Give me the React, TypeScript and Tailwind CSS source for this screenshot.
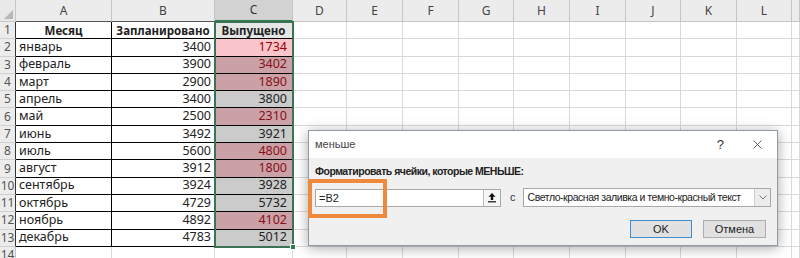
import { X } from "lucide-react";

const font = { fontFamily: '"Noto Sans", "Open Sans", sans-serif' };
const ui = { fontFamily: '"Liberation Sans", Arial, sans-serif' };

type Row = { month: string; plan: number; done: number; hit: boolean };

const rows: Row[] = [
  { month: "январь", plan: 3400, done: 1734, hit: true },
  { month: "февраль", plan: 3900, done: 3402, hit: true },
  { month: "март", plan: 2900, done: 1890, hit: true },
  { month: "апрель", plan: 3400, done: 3800, hit: false },
  { month: "май", plan: 2500, done: 2310, hit: true },
  { month: "июнь", plan: 3492, done: 3921, hit: false },
  { month: "июль", plan: 5600, done: 4800, hit: true },
  { month: "август", plan: 3912, done: 1800, hit: true },
  { month: "сентябрь", plan: 3924, done: 3928, hit: false },
  { month: "октябрь", plan: 4729, done: 5732, hit: false },
  { month: "ноябрь", plan: 4892, done: 4102, hit: true },
  { month: "декабрь", plan: 4783, done: 5012, hit: false },
];

const letters = ["D", "E", "F", "G", "H", "I", "J", "K", "L", ""];

function EmptyCells() {
  return (
    <>
      {letters.map((l, i) => (
        <div key={i} className="border-r border-b border-[#d9d9d9] bg-white" />
      ))}
    </>
  );
}

export default function App() {
  return (
    <div className="relative h-[258px] w-[800px] overflow-hidden bg-white text-[12.5px] text-[#222]" style={font}>
      {/* лист */}
      <div className="relative grid h-[258px] grid-cols-[16px_96px_103px_78px_54px_56px_56px_55px_56px_56px_55px_56px_55px_1fr] grid-rows-[22px_repeat(13,17.3px)_11px]">
        {/* заголовки столбцов */}
        <div className="relative border-r border-b border-[#c6c6c6] bg-[#e9e9e9]">
          <div className="absolute right-[2px] bottom-[2px] h-0 w-0 border-b-[9px] border-l-[9px] border-b-[#b7b7b7] border-l-transparent" />
        </div>
        <div className="flex items-center justify-center border-r border-b border-r-[#c6c6c6] border-b-[#555] bg-[#ececec] text-[12px] text-[#444]">A</div>
        <div className="flex items-center justify-center border-r border-b border-r-[#c6c6c6] border-b-[#555] bg-[#ececec] text-[12px] text-[#444]">B</div>
        <div className="flex items-center justify-center border-r border-b-2 border-r-[#c6c6c6] border-b-[#2f7a4e] bg-[#d2d2d2] text-[12px] text-[#333]">C</div>
        {letters.map((l, i) => (
          <div key={i} className="flex items-center justify-center border-r border-b border-[#c6c6c6] bg-[#ececec] text-[12px] text-[#444]">
            {l}
          </div>
        ))}

        {/* строка 1 */}
        <div className="flex items-center justify-center border-r border-b border-r-[#333] border-b-[#d0d0d0] bg-[#ececec] text-[12px] text-[#555]">1</div>
        <div className="flex items-center justify-center border-r border-b border-black text-[11.5px] font-bold">Месяц</div>
        <div className="flex items-center justify-center border-r border-b border-black text-[11.5px] font-bold">Запланировано</div>
        <div className="flex items-center justify-center border-r border-b border-black bg-[#e6e6e6] text-[11.5px] font-bold">Выпущено</div>
        <EmptyCells />

        {rows.map((r, i) => (
          <Line key={r.month} n={i + 2} row={r} active={i === 0} />
        ))}

        {/* строка 14 */}
        <div className="flex items-start justify-center border-r border-[#c6c6c6] bg-[#ececec] text-[12px] leading-[16px] text-[#555]">14</div>
        <div className="border-r border-[#d9d9d9]" />
        <div className="border-r border-[#d9d9d9]" />
        <div className="border-r border-[#d9d9d9]" />
        {letters.map((l, i) => (
          <div key={i} className="border-r border-[#d9d9d9]" />
        ))}

        {/* выделение C1:C13 */}
        <div className="pointer-events-none absolute top-[21px] left-[214px] h-[227px] w-[80px] border-2 border-[#3d7355]" />
        <div className="pointer-events-none absolute top-[244px] left-[290px] h-[6px] w-[6px] border border-white bg-[#2f7a4e]" />
      </div>

      {/* диалог */}
      <div className="absolute top-[130px] left-[308px] flex h-[116px] w-[470px] flex-col border border-[#8f9aa6] bg-[#f0f0f0] shadow-[0_2px_12px_rgba(0,0,0,0.35)]" style={ui}>
        <div className="flex h-[27px] items-center justify-between bg-white pr-[12px] pl-[6px]">
          <span className="text-[11px] text-[#444]">меньше</span>
          <div className="flex items-center gap-[26px] text-[#333]">
            <span className="text-[13px]">?</span>
            <X size={15} strokeWidth={1.2} />
          </div>
        </div>

        <div className="relative flex flex-1 flex-col px-[6px] pt-[6px]">
          <div className="text-[10.5px] leading-[14px] font-bold tracking-[-0.5px] text-[#222]">Форматировать ячейки, которые МЕНЬШЕ:</div>

          <div className="mt-[10px] flex items-center">
            <div className="flex h-[18px] w-[188px] items-stretch border border-[#a8a8a8] bg-white">
              <span className="flex-1 pl-[3px] text-[11px] leading-[16px]">=B2</span>
              <span className="flex w-[17px] items-center justify-center border-l border-[#bdbdbd] bg-[#f6f6f6]">
                <svg width="10" height="11" viewBox="0 0 10 11">
                  <path d="M5 1 L1.5 4.8 H3.8 V8 H6.2 V4.8 H8.5 Z" fill="#111" />
                  <rect x="1" y="9.2" width="8" height="1.2" fill="#111" />
                </svg>
              </span>
            </div>
            <span className="ml-[9px] text-[11px] text-[#333]">с</span>
            <div className="ml-[7px] flex h-[19px] w-[251px] items-stretch border border-[#a8a8a8] bg-white">
              <span className="flex-1 overflow-hidden pl-[4px] text-[10.5px] leading-[17px] tracking-[-0.45px] whitespace-nowrap text-[#222]">Светло-красная заливка и темно-красный текст</span>
              <span className="flex w-[16px] items-center justify-center border-l border-[#cfcfcf] bg-[#ececec]">
                <svg width="8" height="5" viewBox="0 0 8 5">
                  <path d="M0.5 0.5 L4 4 L7.5 0.5" fill="none" stroke="#777" strokeWidth="1" />
                </svg>
              </span>
            </div>
          </div>

          <div className="mt-[13px] flex justify-end gap-[11px] pr-[5px]">
            <button className="flex h-[18px] w-[62px] items-center justify-center border border-[#3b8ed0] bg-[#e1e1e1] text-[11px] text-[#222]">OK</button>
            <button className="flex h-[18px] w-[63px] items-center justify-center border border-[#adadad] bg-[#e1e1e1] text-[11px] text-[#222]">Отмена</button>
          </div>

          {/* оранжевая рамка */}
          <div className="pointer-events-none absolute top-[21px] left-[-1px] h-[39px] w-[79px] border-[4px] border-[#ef8a3c]" />
        </div>
      </div>
    </div>
  );
}

function Line({ n, row, active }: { n: number; row: Row; active: boolean }) {
  const c = active
    ? "bg-[#fbc6cb] text-[#9c0006]"
    : row.hit
      ? "bg-[#c9a1a6] text-[#8a0f18]"
      : "bg-[#cbcbcb] text-[#222]";
  return (
    <>
      <div className="flex items-center justify-center border-r border-b border-r-[#333] border-b-[#d0d0d0] bg-[#ececec] text-[12px] text-[#555]">{n}</div>
      <div className="flex items-center overflow-hidden border-r border-b border-black pl-[3px] whitespace-nowrap">{row.month}</div>
      <div className="flex items-center justify-end border-r border-b border-black pr-[3px]">{row.plan}</div>
      <div className={`flex items-center justify-end border-r border-b border-black pr-[5px] ${c}`}>{row.done}</div>
      <EmptyCells />
    </>
  );
}
